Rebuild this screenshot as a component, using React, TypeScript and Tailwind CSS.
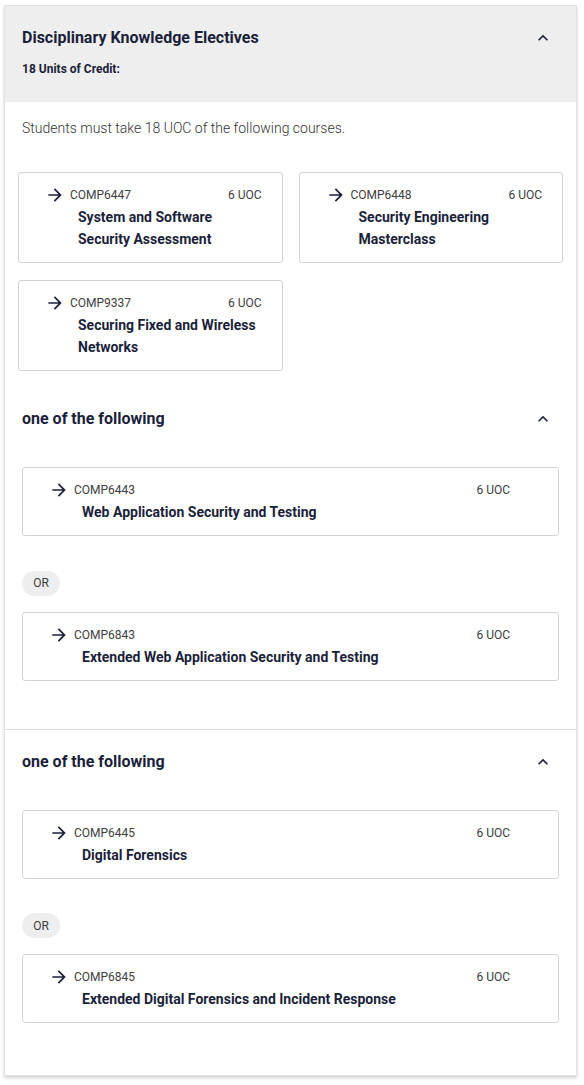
import React from 'react'

type Course = { code: string; title: string; uoc: number }

const electives: Course[] = [
  { code: 'COMP6447', title: 'System and Software Security Assessment', uoc: 6 },
  { code: 'COMP6448', title: 'Security Engineering Masterclass', uoc: 6 },
  { code: 'COMP9337', title: 'Securing Fixed and Wireless Networks', uoc: 6 },
]

const groups: Course[][] = [
  [
    { code: 'COMP6443', title: 'Web Application Security and Testing', uoc: 6 },
    { code: 'COMP6843', title: 'Extended Web Application Security and Testing', uoc: 6 },
  ],
  [
    { code: 'COMP6445', title: 'Digital Forensics', uoc: 6 },
    { code: 'COMP6845', title: 'Extended Digital Forensics and Incident Response', uoc: 6 },
  ],
]

function ArrowIcon() {
  return (
    <svg width="20" height="20" viewBox="0 0 24 24" className="shrink-0 text-[#1b1f3a]" fill="currentColor">
      <path d="M12 4l-1.41 1.41L16.17 11H4v2h12.17l-5.58 5.59L12 20l8-8z" />
    </svg>
  )
}

function ChevronUp() {
  return (
    <svg width="20" height="20" viewBox="0 0 24 24" className="text-[#1b1f3a]" fill="currentColor">
      <path d="M12 8l-6 6 1.41 1.41L12 10.83l4.59 4.58L18 14z" />
    </svg>
  )
}

function CourseCard({ course, wide }: { course: Course; wide?: boolean }) {
  return (
    <div
      className={
        wide
          ? 'border border-[#d4d4d4] rounded-[3px] bg-white pl-[26px] pr-[48px] pt-[14px] pb-[12px]'
          : 'border border-[#d4d4d4] rounded-[3px] bg-white pl-[26px] pr-[20px] pt-[14px] pb-[12px]'
      }
    >
      <div className="flex items-center h-4">
        <ArrowIcon />
        <span className="ml-[5px] text-[12px] leading-4 text-[#3d3d3d]">{course.code}</span>
        <span className="ml-auto text-[12px] leading-4 text-[#3d3d3d]">{course.uoc} UOC</span>
      </div>
      <p className="mt-[3px] pl-[33px] text-[14px] leading-[22px] font-bold text-[#1b1f3a]">{course.title}</p>
    </div>
  )
}

function OneOfGroup({ courses }: { courses: Course[] }) {
  return (
    <>
      <div className="flex items-center justify-between h-6">
        <h3 className="text-[16px] leading-6 font-bold text-[#1b1f3a]">one of the following</h3>
        <span className="mr-[6px]">
          <ChevronUp />
        </span>
      </div>
      <div className="mt-[36px]">
        {courses.map((c, i) => (
          <div key={c.code}>
            {i > 0 && (
              <div className="mt-[34px] mb-[16px]">
                <span className="inline-flex items-center justify-center h-[25px] w-[38px] rounded-full bg-[#eeeeee] text-[12px] text-[#3d3d3d]">
                  OR
                </span>
              </div>
            )}
            <CourseCard course={c} wide />
          </div>
        ))}
      </div>
    </>
  )
}

export default function App() {
  return (
    <div className="min-h-screen bg-white pt-[5px] pl-[4px]" style={{ fontFamily: 'Roboto, "Liberation Sans", sans-serif' }}>
      <div className="w-[573px] border border-[#e2e2e2] bg-white shadow-[0_2px_3px_rgba(0,0,0,0.18)]">
        <div className="h-[96px] bg-[#eeeeee] pl-[17px] pr-[23px] pt-[20px]">
          <div className="flex items-center justify-between h-6">
            <h2 className="text-[16px] leading-6 font-bold text-[#1b1f3a]">Disciplinary Knowledge Electives</h2>
            <ChevronUp />
          </div>
          <p className="mt-[11px] text-[12px] leading-4 font-bold text-[#1b1f3a]">18 Units of Credit:</p>
        </div>

        <div className="px-[13px]">
          <p className="pt-[16px] pl-[4px] text-[14px] leading-5 font-light text-[#333]">
            Students must take 18 UOC of the following courses.
          </p>
          <div className="mt-[34px] grid grid-cols-2 gap-x-[16px] gap-y-[17px]">
            {electives.map((c) => (
              <CourseCard key={c.code} course={c} />
            ))}
          </div>
        </div>

        <div className="px-[17px] pt-[36px] pb-[48px]">
          <OneOfGroup courses={groups[0]} />
        </div>
        <div className="border-t border-[#dcdcdc] px-[17px] pt-[20px] pb-[52px]">
          <OneOfGroup courses={groups[1]} />
        </div>
      </div>
    </div>
  )
}
